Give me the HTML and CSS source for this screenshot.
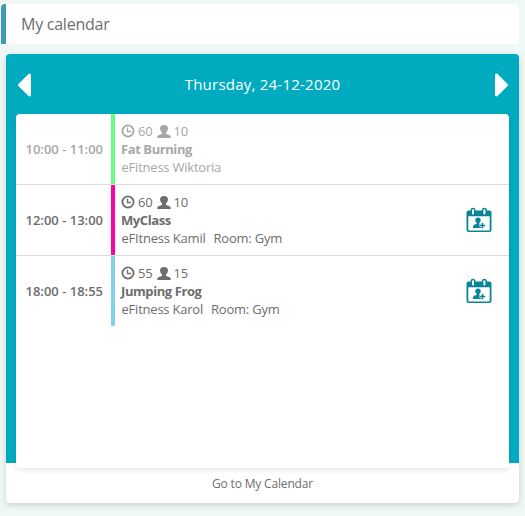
FILE: index.html
```html
<!DOCTYPE html>
<html lang="en">
<head>
<meta charset="utf-8">
<title>My calendar</title>
<link rel="stylesheet" href="styles.css">
</head>
<body>
<svg class="defs" aria-hidden="true">
  <symbol id="clock" viewBox="0 0 14 14">
    <circle cx="7" cy="7" r="5.600" fill="none" stroke="currentColor" stroke-width="1.800"/>
    <path d="M6.500 3.500V7.500H10" fill="none" stroke="currentColor" stroke-width="1.300"/>
  </symbol>
  <symbol id="person" viewBox="0 0 14 13">
    <path d="M7 0C4.300 0 3 1.300 3 3.300C3 5.200 4 6.700 5 7.600V8.700C4.300 9.400 1.200 9.800 .6 10.800Q.3 11.400.3 13H13.700Q13.700 11.400 13.400 10.800C12.800 9.800 9.700 9.400 9 8.700V7.600C10 6.700 11 5.200 11 3.300C11 1.300 9.700 0 7 0Z" fill="currentColor"/>
  </symbol>
  <symbol id="book" viewBox="0 0 26 26">
    <path d="M2.500 3.500H23.500Q25.500 3.500 25.500 5.500V22.500Q25.500 25 23 25H3Q.5 25 .5 22.500V5.500Q.5 3.500 2.500 3.500Z" fill="currentColor"/>
    <path d="M2.300 9.300H23.700V22.300Q23.700 23.500 22.500 23.500H3.500Q2.300 23.500 2.300 22.300Z" fill="#fff"/>
    <rect x="4.500" y=".8" width="5" height="7.400" rx="2.500" fill="currentColor"/>
    <rect x="15.900" y=".8" width="5" height="7.400" rx="2.500" fill="currentColor"/>
    <rect x="6" y="2.200" width="2" height="5.200" rx="1" fill="#fff"/>
    <rect x="17.400" y="2.200" width="2" height="5.200" rx="1" fill="#fff"/>
    <circle cx="12" cy="13.300" r="2.700" fill="currentColor"/>
    <path d="M10.700 15H13.300V16.800L15 18V21H7V19.300Q7.400 17.300 10.700 16.800Z" fill="currentColor"/>
    <path d="M16.500 15.500V21.500M13.500 18.500H19.500" stroke="#fff" stroke-width="3"/>
    <path d="M16.500 15.800V21.200M13.800 18.500H19.200" stroke="currentColor" stroke-width="1.600"/>
  </symbol>
</svg>
<h1 class="title">My calendar</h1>
<main class="card">
  <section class="panel">
    <header class="day">
      <svg class="arrow" viewBox="0 0 16 26"><path d="M13.500 3V23L3.500 13Z"/></svg>
      <span>Thursday, 24-12-2020</span>
      <svg class="arrow" viewBox="0 0 16 26"><path d="M3.500 3V23L13.500 13Z"/></svg>
    </header>
    <div class="list">
      <article class="row past">
        <div class="time">10:00 - 11:00</div>
        <div class="info green">
          <div class="meta"><svg class="clock"><use href="#clock"/></svg><span>60</span><svg class="person"><use href="#person"/></svg><span>10</span></div>
          <div class="name">Fat Burning</div>
          <div class="place"><span>eFitness Wiktoria</span></div>
        </div>
      </article>
      <article class="row">
        <div class="time">12:00 - 13:00</div>
        <div class="info pink">
          <div class="meta"><svg class="clock"><use href="#clock"/></svg><span>60</span><svg class="person"><use href="#person"/></svg><span>10</span></div>
          <div class="name">MyClass</div>
          <div class="place"><span>eFItness Kamil</span><span>Room: Gym</span></div>
        </div>
        <svg class="book"><use href="#book"/></svg>
      </article>
      <article class="row">
        <div class="time">18:00 - 18:55</div>
        <div class="info blue">
          <div class="meta"><svg class="clock"><use href="#clock"/></svg><span>55</span><svg class="person"><use href="#person"/></svg><span>15</span></div>
          <div class="name">Jumping Frog</div>
          <div class="place"><span>eFitness Karol</span><span>Room: Gym</span></div>
        </div>
        <svg class="book"><use href="#book"/></svg>
      </article>
    </div>
  </section>
  <footer class="more">Go to My Calendar</footer>
</main>
</body>
</html>
```
FILE: styles.css
```css
* { box-sizing: border-box; }
body {
  margin: 0;
  padding: 4px 6px 0 1px;
  height: 516px;
  overflow: hidden;
  background: #eff8f7;
  color: #6d6d6d;
  font: 13px/18px "Open Sans", sans-serif;
}
.defs { position: absolute; width: 0; height: 0; }
.title {
  height: 40px;
  margin: 0 0 10px;
  padding-left: 15px;
  border-left: 5px solid #429bb2;
  border-radius: 4px 4px 0 0;
  background: #fff;
  font-size: 16px;
  font-weight: 400;
  line-height: 40px;
  letter-spacing: -.25px;
}
.card {
  height: 449px;
  margin-left: 5px;
  border-radius: 4px;
  background: #fff;
  box-shadow: 0 2px 6px rgba(0, 0, 0, .16);
}
.panel {
  height: 409px;
  padding: 0 10px;
  border-radius: 4px 4px 0 0;
  background: #00abc0;
}
.day {
  display: flex;
  align-items: center;
  justify-content: space-between;
  height: 60px;
  color: #fff;
  font-size: 15px;
  letter-spacing: .23px;
}
.arrow {
  width: 16px;
  height: 26px;
  margin-top: 1px;
  fill: #fff;
  stroke: #fff;
  stroke-width: 3;
  stroke-linejoin: round;
}
.list {
  height: 354px;
  border-radius: 4px;
  background: #fff;
  box-shadow: 0 2px 5px rgba(0, 0, 0, .1);
  overflow: hidden;
}
.row { display: flex; height: 71px; border-bottom: 1px solid #dedede; }
.row:last-child { border-bottom: 0; height: 70px; }
.past { color: #a7a7a7; }
.time {
  width: 95px;
  padding-left: 9.500px;
  font-weight: 600;
  line-height: 71px;
  white-space: nowrap;
}
.info { flex: 1; padding: 8px 0 0 6px; border-left: 4px solid; }
.info > div { height: 18px; }
.green { border-left-color: #69fd83; }
.pink { border-left-color: #ff00a8; }
.blue { border-left-color: #82d3ef; }
.meta { display: flex; align-items: center; letter-spacing: -.15px; }
.clock { width: 14px; height: 14px; margin-right: 3px; }
.person { width: 14px; height: 13px; margin: 0 3px 0 4px; }
.name { font-weight: 700; letter-spacing: -.42px; }
.place { display: flex; gap: 8px; padding-left: .5px; letter-spacing: -.22px; }
.book { width: 26px; height: 26px; margin: 22px 17px 0 0; color: #0a8498; }
.more { height: 40px; font-size: 12px; line-height: 41px; text-align: center; letter-spacing: -.17px; }
```
